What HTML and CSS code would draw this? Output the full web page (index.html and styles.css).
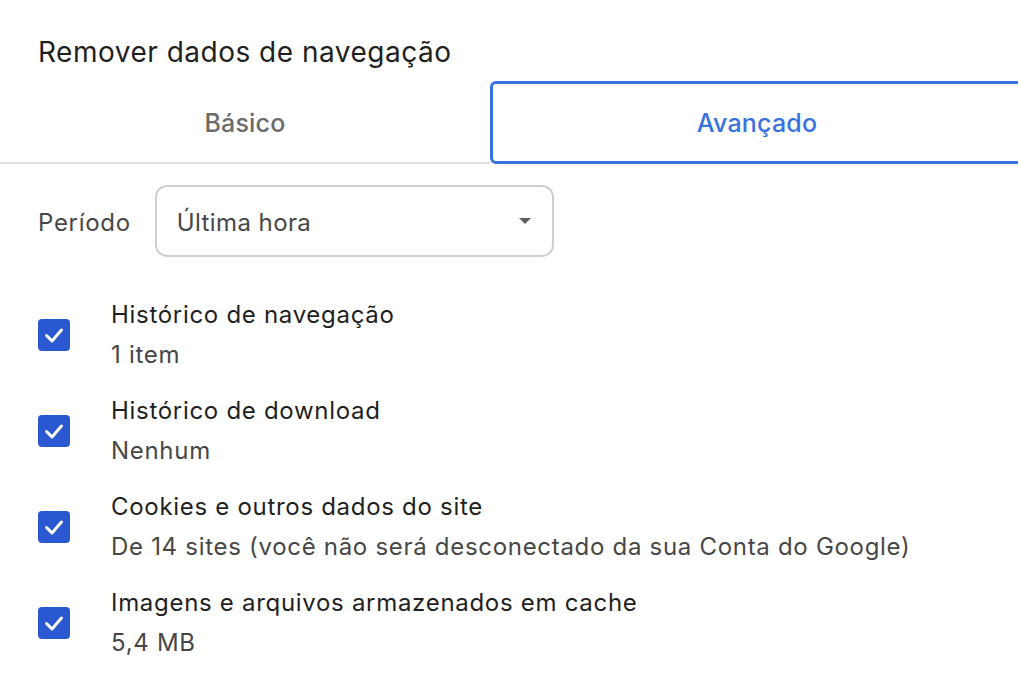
FILE: index.html
```html
<!DOCTYPE html>
<html lang="pt-BR">
<head>
<meta charset="utf-8">
<title>Remover dados de navegação</title>
<link rel="stylesheet" href="styles.css">
</head>
<body>
<div class="dialog">
  <h1 class="title">Remover dados de navegação</h1>
  <div class="tabs">
    <div class="tab">Básico</div>
    <div class="tab tab-active">Avançado</div>
  </div>
  <div class="content">
    <div class="period">
      <span class="period-label">Período</span>
      <div class="select">
        <span class="select-value">Última hora</span>
        <span class="caret"></span>
      </div>
    </div>
    <ul class="options">
      <li class="option">
        <span class="checkbox"><svg viewBox="0 0 32 32" width="32" height="32"><path d="M8.5 16.5 L14 22 L23.5 11" fill="none" stroke="#fff" stroke-width="3" stroke-linecap="round" stroke-linejoin="round"/></svg></span>
        <div class="option-text">
          <div class="option-title">Histórico de navegação</div>
          <div class="option-sub">1 item</div>
        </div>
      </li>
      <li class="option">
        <span class="checkbox"><svg viewBox="0 0 32 32" width="32" height="32"><path d="M8.5 16.5 L14 22 L23.5 11" fill="none" stroke="#fff" stroke-width="3" stroke-linecap="round" stroke-linejoin="round"/></svg></span>
        <div class="option-text">
          <div class="option-title">Histórico de download</div>
          <div class="option-sub">Nenhum</div>
        </div>
      </li>
      <li class="option">
        <span class="checkbox"><svg viewBox="0 0 32 32" width="32" height="32"><path d="M8.5 16.5 L14 22 L23.5 11" fill="none" stroke="#fff" stroke-width="3" stroke-linecap="round" stroke-linejoin="round"/></svg></span>
        <div class="option-text">
          <div class="option-title">Cookies e outros dados do site</div>
          <div class="option-sub">De 14 sites (você não será desconectado da sua Conta do Google)</div>
        </div>
      </li>
      <li class="option">
        <span class="checkbox"><svg viewBox="0 0 32 32" width="32" height="32"><path d="M8.5 16.5 L14 22 L23.5 11" fill="none" stroke="#fff" stroke-width="3" stroke-linecap="round" stroke-linejoin="round"/></svg></span>
        <div class="option-text">
          <div class="option-title">Imagens e arquivos armazenados em cache</div>
          <div class="option-sub">5,4 MB</div>
        </div>
      </li>
    </ul>
  </div>
</div>
</body>
</html>
```
FILE: styles.css
```css
* { box-sizing: border-box; }
html, body {
  margin: 0;
  padding: 0;
  background: #fff;
  overflow: hidden;
}
body {
  font-family: "Inter", "Roboto", "Liberation Sans", sans-serif;
  color: #1f1f1f;
  width: 1018px;
  height: 682px;
}
.dialog {
  width: 1024px;
}
.title {
  margin: 0;
  padding: 32px 0 0 38px;
  font-size: 28px;
  font-weight: 400;
  letter-spacing: 0.5px;
  line-height: 40px;
  height: 81px;
  color: #1f1f1f;
}
.tabs {
  display: flex;
  height: 83px;
}
.tab {
  display: flex;
  align-items: center;
  justify-content: center;
  padding-top: 3px;
  font-size: 25px;
  font-weight: 500;
  letter-spacing: 0.2px;
  color: #6b6b6b;
  border-bottom: 2px solid #e0e0e0;
  width: 490px;
}
.tab-active {
  width: 534px;
  padding-top: 0;
  color: #3872e0;
  border: 3px solid #3872e0;
  border-radius: 6px;
}
.content {
  padding: 21px 0 0 38px;
}
.period {
  display: flex;
  align-items: center;
  gap: 24px;
}
.period-label {
  font-size: 24px;
  letter-spacing: 0.7px;
  color: #474747;
  padding-top: 2px;
}
.select {
  width: 399px;
  height: 72px;
  border: 2px solid #cfcfcf;
  border-radius: 12px;
  display: flex;
  align-items: center;
  justify-content: space-between;
  padding: 0 21px 0 20px;
  font-size: 24px;
  letter-spacing: 0.4px;
  color: #474747;
}
.select-value {
  padding-top: 3px;
}
.caret {
  width: 0;
  height: 0;
  border-left: 6px solid transparent;
  border-right: 6px solid transparent;
  border-top: 6px solid #5f5f5f;
}
.options {
  list-style: none;
  margin: 0;
  padding: 38px 0 0 0;
  display: flex;
  flex-direction: column;
  gap: 16px;
}
.option {
  display: flex;
  align-items: center;
  gap: 41px;
}
.checkbox {
  width: 32px;
  height: 32px;
  border-radius: 4px;
  background: #2a58d1;
  display: flex;
  flex: none;
}
.option-text {
  font-size: 24px;
  letter-spacing: 0.7px;
  line-height: 40px;
}
.option-title {
  color: #1f1f1f;
}
.option-sub {
  color: #474747;
}
```
